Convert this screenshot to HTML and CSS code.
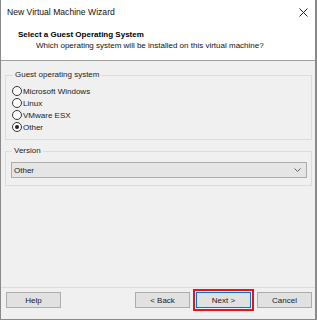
FILE: index.html
```html
<!DOCTYPE html>
<html lang="en">
<head>
    <meta charset="UTF-8">
    <title>New Virtual Machine Wizard</title>
    <link rel="stylesheet" href="styles.css">
</head>
<body>

    <div class="window">
        <div class="titlebar">
            <span class="title">New Virtual Machine Wizard</span>
            <svg class="close" width="9" height="9" viewBox="0 0 9 9">
                <path d="M0.5 0.5 L8.5 8.5 M8.5 0.5 L0.5 8.5" stroke="#222" stroke-width="1"/>
            </svg>
        </div>

        <div class="header">
            <h1>Select a Guest Operating System</h1>
            <p>Which operating system will be installed on this virtual machine?</p>
        </div>

        <div class="content">
            <fieldset class="group">
                <legend>Guest operating system</legend>
                <label class="option"><span class="radio"></span>Microsoft Windows</label>
                <label class="option"><span class="radio"></span>Linux</label>
                <label class="option"><span class="radio"></span>VMware ESX</label>
                <label class="option"><span class="radio checked"></span>Other</label>
            </fieldset>

            <fieldset class="group version">
                <legend>Version</legend>
                <div class="select">
                    <span>Other</span>
                    <svg width="7" height="4" viewBox="0 0 7 4">
                        <path d="M0.5 0.5 L3.5 3.5 L6.5 0.5" fill="none" stroke="#606060" stroke-width="1"/>
                    </svg>
                </div>
            </fieldset>
        </div>

        <div class="footer">
            <button class="btn">Help</button>
            <span class="spacer"></span>
            <button class="btn">&lt; Back</button>
            <button class="btn btn-default">Next &gt;</button>
            <button class="btn">Cancel</button>
        </div>
    </div>

</body>
</html>
```

FILE: styles.css
```css
body {
    margin: 0;
    font-family: "Liberation Sans", Arial, sans-serif;
    font-size: 8px;
    color: #1a1a1a;
    background: #f0f0f0;
}
.window {
    width: 317px;
    height: 320px;
    box-sizing: border-box;
    border-left: 1px solid #8a8a8a;
    border-right: 2px solid #8a8a8a;
    border-bottom: 1px solid #8a8a8a;
    display: flex;
    flex-direction: column;
    overflow: hidden;
}
.titlebar {
    height: 24px;
    background: #fff;
    display: flex;
    align-items: center;
    justify-content: space-between;
    padding: 0 6px 0 6px;
}
.title {
    font-size: 8.6px;
    color: #111;
}
.close {
    margin-right: 1px;
}
.header {
    height: 37px;
    box-sizing: border-box;
    background: #fff;
    border-bottom: 1px solid #a0a0a0;
    padding: 5px 0 0 17px;
}
.header h1 {
    margin: 0;
    font-size: 8px;
    line-height: 11px;
    font-weight: bold;
    color: #000;
}
.header p {
    margin: 0;
    padding-left: 18px;
    line-height: 11px;
    font-size: 8px;
    color: #111;
}
.content {
    flex: 1;
    padding: 9px 3px 0 4px;
}
.group {
    margin: 0;
    border: 1px solid #dcdcdc;
    padding: 5px 0 6px 6px;
}
.group legend {
    padding: 0 2px;
    margin-left: 1px;
    line-height: 10px;
    color: #222;
}
.version {
    margin-top: 6px;
    padding: 6px 4px 7px 5px;
}
.option {
    display: flex;
    align-items: center;
    height: 12px;
    gap: 1px;
}
.radio {
    width: 10px;
    height: 10px;
    box-sizing: border-box;
    border: 1px solid #333;
    border-radius: 50%;
    background: #fff;
    display: flex;
    align-items: center;
    justify-content: center;
}
.radio.checked::after {
    content: "";
    width: 4px;
    height: 4px;
    border-radius: 50%;
    background: #222;
}
.select {
    height: 16px;
    box-sizing: border-box;
    border: 1px solid #adadad;
    background: #e5e5e5;
    display: flex;
    align-items: center;
    justify-content: space-between;
    padding: 0 5px 0 2px;
}
.footer {
    border-top: 1px solid #dcdcdc;
    height: 27px;
    display: flex;
    align-items: flex-start;
    padding: 4px 3px 0 5px;
    gap: 6px;
}
.spacer {
    flex: 1;
}
.btn {
    width: 55px;
    height: 16px;
    margin: 0;
    padding: 0;
    border: 1px solid #adadad;
    background: #e1e1e1;
    font-family: inherit;
    font-size: 8px;
    color: #1a1a1a;
}
.btn-default {
    border-color: #0078d7;
    box-shadow: inset 0 0 0 1px #cfe3f7;
    outline: 2px solid #e8141c;
    outline-offset: 1px;
}
```
